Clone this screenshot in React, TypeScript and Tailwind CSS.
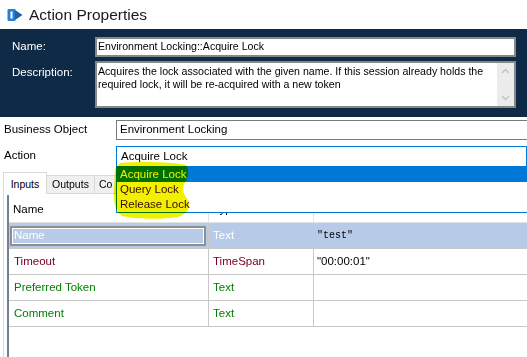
import React from "react";

const rows = [
  { name: "Name", type: "Text", value: '"test"', tone: "sel" },
  { name: "Timeout", type: "TimeSpan", value: '"00:00:01"', tone: "red" },
  { name: "Preferred Token", type: "Text", value: "", tone: "green" },
  { name: "Comment", type: "Text", value: "", tone: "green" },
];

function TitleIcon() {
  return (
    <svg width="16" height="14" viewBox="0 0 16 14">
      <rect x="0.5" y="1" width="8" height="12" rx="1" fill="#2a7fd4" />
      <rect x="3.5" y="3.5" width="2" height="7" fill="#ffffff" />
      <path d="M8 2 L15.5 7 L8 12 Z" fill="#1d5fa8" />
    </svg>
  );
}

export default function App() {
  return (
    <div
      className="relative h-[357px] w-[527px] overflow-hidden bg-white text-[11.5px] text-black"
      style={{ fontFamily: '"Liberation Sans", Arial, sans-serif' }}
    >
      {/* Title */}
      <div className="flex h-[29px] items-center gap-[6px] pl-[7px] pt-[1px]">
        <TitleIcon />
        <span className="text-[15.5px] text-[#1a1a1a]">Action Properties</span>
      </div>

      {/* Header panel */}
      <div className="h-[88px] bg-[#0e2a47] pl-[12px] pr-[11px] pt-[8px]">
        <div className="grid grid-cols-[83px_1fr] gap-y-[4px]">
          <div className="flex h-[20px] items-center text-white">Name:</div>
          <div className="flex h-[20px] items-center border-2 border-[#888888] bg-white pl-[1px] text-[10.6px]">
            Environment Locking::Acquire Lock
          </div>
          <div className="pt-[3px] text-white">Description:</div>
          <div className="flex h-[47px] border-2 border-[#888888] bg-white">
            <div className="flex-1 pl-[1px] pt-[2px] text-[10.6px] leading-[13px]">
              Acquires the lock associated with the given name. If this session already holds the
              required lock, it will be re-acquired with a new token
            </div>
            <div className="flex w-[17px] flex-col items-center justify-between bg-[#ececec] py-[5px]">
              <svg width="9" height="6" viewBox="0 0 9 6">
                <path d="M1 5 L4.5 1.5 L8 5" stroke="#c2c2c2" strokeWidth="1.3" fill="none" />
              </svg>
              <svg width="9" height="6" viewBox="0 0 9 6">
                <path d="M1 1 L4.5 4.5 L8 1" stroke="#c2c2c2" strokeWidth="1.3" fill="none" />
              </svg>
            </div>
          </div>
        </div>
      </div>

      {/* Business object / action */}
      <div className="pl-[4px] pt-[3px]">
        <div className="flex h-[20px] items-center">
          <div className="w-[112px]">Business Object</div>
          <div className="flex h-[20px] flex-1 items-center border-y border-l border-[#7a7a7a] pl-[3px]">
            Environment Locking
          </div>
        </div>
        <div className="mt-[6px] flex h-[20px] items-center">
          <div className="w-[112px]">Action</div>
          <div className="flex h-[20px] flex-1 items-center border-x border-t border-[#0078d7] pl-[4px]">
            Acquire Lock
          </div>
        </div>
      </div>

      {/* Tabs */}
      <div className="mt-[6px] flex h-[22px] items-end pl-[3px] text-[10.5px]">
        <div className="relative z-10 flex h-[22px] w-[44px] items-center justify-center border-x border-t border-[#d9d9d9] bg-white pt-[2px]">
          Inputs
        </div>
        <div className="flex h-[19px] w-[48px] items-center justify-center border-r border-t border-b border-[#d9d9d9] bg-[#f0f0f0] pt-[1px]">
          Outputs
        </div>
        <div className="flex h-[19px] w-[21px] items-center overflow-hidden whitespace-nowrap border-t border-b border-[#d9d9d9] bg-[#f0f0f0] pl-[4px] pt-[1px]">
          Co
        </div>
        <div className="h-[19px] flex-1 border-b border-[#d9d9d9]" />
      </div>

      {/* Panel with grid */}
      <div className="-mt-px ml-[3px] h-[170px] border-l border-t border-[#d9d9d9] pl-[3px] pt-[1px]">
        <div className="h-full border-l-2 border-[#71819a] bg-white">
          <div className="grid h-[28px] grid-cols-[200px_105px_1fr] items-center border-b border-[#e4e4e4]">
            <div className="h-full border-r border-[#e4e4e4] pl-[4px] leading-[28px]">Name</div>
            <div className="h-full border-r border-[#e4e4e4] pl-[4px] leading-[28px]">Type</div>
            <div className="pl-[4px]">Value</div>
          </div>
          {rows.map((r) => {
            const color =
              r.tone === "sel" ? "text-white" : r.tone === "red" ? "text-[#800020]" : "text-[#008000]";
            return (
              <div
                key={r.name}
                className={`grid h-[26px] grid-cols-[200px_105px_1fr] border-b border-[#c8c8c8] ${r.tone === "sel" ? "bg-[#b7cbe8]" : ""}`}
              >
                <div className="flex items-center border-r border-[#c8c8c8] pl-[1px]">
                  {r.tone === "sel" ? (
                    <div className="flex h-[20px] w-[196px] items-center border-2 border-[#8e8e8e] pl-[2px] text-white shadow-[inset_0_0_0_1px_#ffffff]">
                      {r.name}
                    </div>
                  ) : (
                    <span className={`pl-[4px] ${color}`}>{r.name}</span>
                  )}
                </div>
                <div className={`flex items-center border-r border-[#c8c8c8] pl-[4px] ${color}`}>{r.type}</div>
                <div
                  className="flex items-center pl-[3px]"
                  style={
                    r.tone === "sel"
                      ? { fontFamily: '"Liberation Mono", "DejaVu Sans Mono", monospace', fontSize: "10px" }
                      : undefined
                  }
                >
                  {r.value}
                </div>
              </div>
            );
          })}
        </div>
      </div>

      {/* Dropdown list */}
      <div className="absolute left-[116px] top-[166px] h-[47px] w-[420px] border-x border-b border-[#0078d7] bg-white leading-[15px]">
        <div className="h-[16px] bg-[#0078d7] pl-[3px] leading-[16px] text-white">Acquire Lock</div>
        <div className="h-[15px] pl-[3px] text-[#3a0a14]">Query Lock</div>
        <div className="h-[15px] pl-[3px] text-[#3a0a14]">Release Lock</div>
      </div>

      {/* Highlighter mark */}
      <svg
        className="pointer-events-none absolute left-0 top-0 mix-blend-multiply"
        width="527"
        height="357"
        viewBox="0 0 527 357"
      >
        <path
          d="M120 163 C140 161 175 162 186 165 C190 170 188 178 184 184 C182 190 184 196 188 200 C191 208 187 214 178 217 C160 220 135 219 122 216 C115 212 113 200 114 190 C115 182 114 172 116 167 Z"
          fill="#f2f000"
        />
      </svg>
    </div>
  );
}
